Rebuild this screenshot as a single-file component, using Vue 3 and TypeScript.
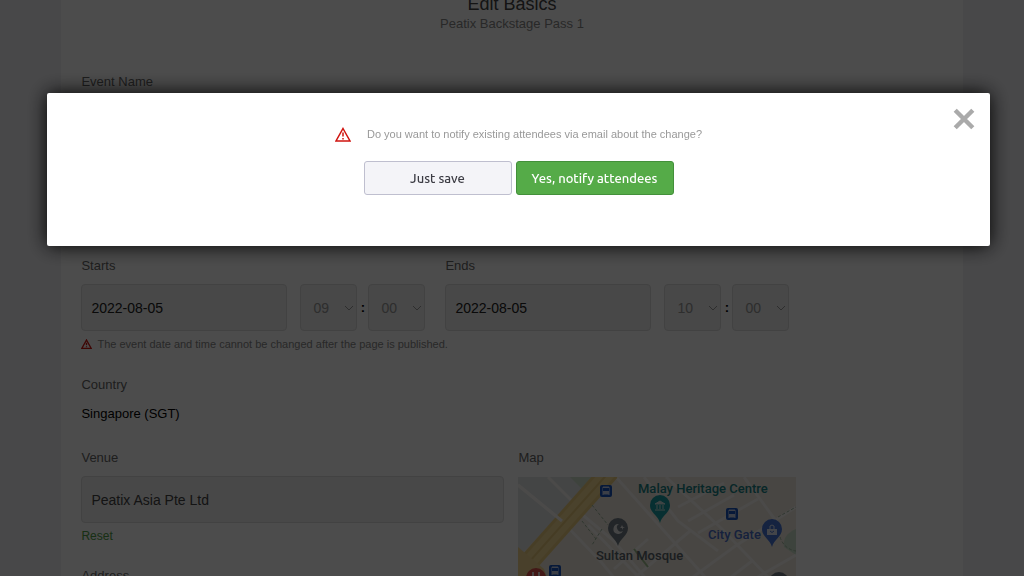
<script setup lang="ts">
interface Slot { id: string; label: string; date: string; hour: string; minute: string }
const slots: Slot[] = [
  { id: 'start', label: 'Starts', date: '2022-08-05', hour: '09', minute: '00' },
  { id: 'end', label: 'Ends', date: '2022-08-05', hour: '10', minute: '00' },
]
const stops: number[][] = [[88, 14], [214, 37], [37, 94]]
</script>

<template>
  <div class="page">
    <main class="panel">
      <header class="head">
        <h1>Edit Basics</h1>
        <p>Peatix Backstage Pass 1</p>
      </header>

      <div class="field name">
        <label for="event-name">Event Name</label>
        <input id="event-name" type="text" disabled />
      </div>

      <div class="slots">
        <div v-for="s in slots" :key="s.id" class="slot">
          <label :for="s.id + '-date'">{{ s.label }}</label>
          <div class="controls">
            <input :id="s.id + '-date'" class="date" type="text" :value="s.date" disabled />
            <span class="pick">
              <select :aria-label="s.label + ' hour'" disabled><option>{{ s.hour }}</option></select>
              <svg viewBox="0 0 10 6"><path d="M1 1l4 4 4-4" /></svg>
            </span>
            <span class="colon">:</span>
            <span class="pick">
              <select :aria-label="s.label + ' minute'" disabled><option>{{ s.minute }}</option></select>
              <svg viewBox="0 0 10 6"><path d="M1 1l4 4 4-4" /></svg>
            </span>
          </div>
        </div>
      </div>
      <p class="note">
        <svg class="warn" viewBox="0 0 16 15"><path d="M8 1.5L15 14H1z" /><path d="M8 5.5v4M8 11v1.5" /></svg>
        The event date and time cannot be changed after the page is published.
      </p>

      <div class="country">
        <span class="label">Country</span>
        <p>Singapore (SGT)</p>
      </div>

      <div class="place">
        <div class="field venue">
          <label for="venue">Venue</label>
          <input id="venue" type="text" value="Peatix Asia Pte Ltd" disabled />
          <a href="#">Reset</a>
          <span class="label address">Address</span>
        </div>
        <div class="mapcol">
          <span class="label">Map</span>
          <svg class="map" viewBox="0 0 278 140" preserveAspectRatio="xMinYMin slice" role="img" aria-label="Map">
            <rect width="278" height="140" fill="#f0eadf" />
            <path d="M0 0H80L0 80z" fill="#e4e6e8" />
            <path d="M52 0H84L70 18z" fill="#d0e2cc" />
            <path d="M278 52q-14 6-12 18l12 8z" fill="#cce2cc" />
            <g class="roads">
              <path d="M0 8L44 44 84 86 120 130M30 0L60 30M70 48L150 130M60 34L96 64 130 104M98 0L196 110M126 0L160 44 200 74M148 0L204 52 250 100M226 0L258 44M160 30L206 6M170 44L216 18M180 56L240 22M70 140L172 54M96 92L130 62M120 140L216 70 278 30M170 140L278 78M200 110L234 84" />
            </g>
            <path d="M-4 102L92-6" fill="none" stroke="#efcf80" stroke-width="20" />
            <path d="M-4 102L92-6" fill="none" stroke="#f8dc94" stroke-width="14" />
            <path d="M-4 102L92-6" fill="none" stroke="#e8c878" stroke-width="2" />
            <path d="M0 70L26 92 40 130H0z" fill="#f3d892" />
            <path d="M0 8L44 44" fill="none" stroke="#faf8f4" stroke-width="3" />
            <path d="M74 28l16 20M64 44l14 18M84 52L74 68M260 40l18-10M262 60q4 12 16 14" fill="none" stroke="#a0b8a0" stroke-width="1" stroke-dasharray="3 2" />
            <path d="M116 72l14 18" fill="none" stroke="#a0c090" stroke-width="2" />
            <g v-for="(p, i) in stops" :key="i" :transform="`translate(${p[0]} ${p[1]})`">
              <rect x="-6" y="-6" width="12" height="12" rx="2" fill="#1a55c0" />
              <path d="M-3-4H3V3H-3zM-3 3v1M3 3v1" fill="#c8d4ec" stroke="#c8d4ec" />
              <path d="M-3-3H3V0H-3z" fill="#1a55c0" />
            </g>
            <g transform="translate(142 29)">
              <path d="M0 17C-2 9-10 7-10-1A10 10 0 0 1 10-1C10 7 2 9 0 17z" fill="#1a9ea4" />
              <path d="M-5-2L0-5 5-2zM-5 4H5M-3-1V3M0-1V3M3-1V3" fill="#d0e4e4" stroke="#d0e4e4" />
            </g>
            <g transform="translate(100 52)">
              <path d="M0 17C-2 9-10 7-10-1A10 10 0 0 1 10-1C10 7 2 9 0 17z" fill="#737d86" />
              <path d="M1-5A5 5 0 1 0 5 2 4 4 0 0 1 1-5zM4-4l1 2 2 0-2 1 0 2-1-2-2 0 1-1z" fill="#e8e8e8" />
            </g>
            <g transform="translate(254 53)">
              <path d="M0 17C-2 9-10 7-10-1A10 10 0 0 1 10-1C10 7 2 9 0 17z" fill="#4876d8" />
              <path d="M-5-1H5V5H-5z" fill="#e0e6f4" />
              <path d="M-2-1V-4Q0-6 2-4V-1" fill="none" stroke="#e0e6f4" />
              <path d="M-2 1Q0 4 2 1" fill="none" stroke="#4876d8" />
            </g>
            <circle cx="18" cy="101" r="10" fill="#e0504a" />
            <path d="M15 95v5q0 2-2 2M15 95v12M21 95v12" fill="none" stroke="#f4e0dc" stroke-width="2" />
            <circle cx="261" cy="105" r="10" fill="#737d86" />
            <g class="names">
              <text x="120" y="16" fill="#1a8286">Malay Heritage Centre</text>
              <text x="190" y="62" fill="#4a70cc">City Gate</text>
              <text x="78" y="83" fill="#5a646c">Sultan Mosque</text>
            </g>
          </svg>
        </div>
      </div>
    </main>

    <div class="overlay"></div>
    <section class="dialog" role="dialog" aria-modal="true" aria-labelledby="question">
      <button class="close" type="button" aria-label="Close">
        <svg viewBox="0 0 20 20"><path d="M2 2l16 16M18 2L2 18" /></svg>
      </button>
      <p id="question">
        <svg class="warn" viewBox="0 0 16 15"><path d="M8 1.5L15 14H1z" /><path d="M8 5.5v4M8 11v1.5" /></svg>
        Do you want to notify existing attendees via email about the change?
      </p>
      <div class="actions">
        <button type="button" class="plain">Just save</button>
        <button type="button" class="go">Yes, notify attendees</button>
      </div>
    </section>
  </div>
</template>

<style>
body { overflow: hidden; background: #f1f1f5; }
</style>

<style scoped>
* { box-sizing: border-box; }
.page { height: 100vh; overflow: hidden; background: #f1f1f5; font: 13px/20px "Liberation Sans", Arial, sans-serif; color: #000; }
.panel { width: 88%; min-height: 100vh; margin: 0 auto; padding: 0 20px; background: #fff; }
h1, p { margin: 0; font-weight: 400; }
.head { text-align: center; height: 72px; display: flex; flex-direction: column; }
.head h1 { font-size: 18px; line-height: 20px; margin-top: -6px; color: #444; }
.head p { font-size: 13px; color: #888; }
label, .label { display: block; color: #666; font-size: 13px; line-height: 20px; }
input, select { height: 47px; border: 1px solid #ddd; border-radius: 4px; background: #f0f0f0; font: 14px "Liberation Sans", Arial, sans-serif; padding: 0 9px; opacity: 1; }
.field { display: flex; flex-direction: column; align-items: stretch; }
.field input { margin-top: 8px; color: #444; }
.name { height: 184px; }
.slots { display: flex; gap: 20px; }
.slot { width: 344px; }
.controls { display: flex; align-items: center; margin-top: 8px; }
.date { width: 206px; margin-right: 13px; color: #222; }
.pick { position: relative; width: 57px; }
.pick select { width: 100%; appearance: none; color: #999; padding: 0 12px; }
.pick svg { position: absolute; right: 3px; top: 21px; width: 10px; height: 6px; fill: none; stroke: #999; stroke-width: 1; }
.colon { width: 11px; text-align: center; font-weight: 700; }
.note { display: flex; align-items: center; gap: 5px; margin-top: 3px; font-size: 11px; color: #888; }
.warn { fill: none; stroke: #d0140f; stroke-width: 2; }
.note .warn { width: 11px; height: 10px; }
.country { margin-top: 21px; }
.country p { margin-top: 9px; }
.place { display: flex; gap: 14px; margin-top: 24px; }
.venue { width: 423px; }
.venue a { margin-top: 3px; font-size: 12px; color: #50a046; text-decoration: none; }
.address { margin-top: 20px; }
.map { display: block; width: 278px; height: 140px; margin-top: 9px; }
.roads { fill: none; stroke: #faf8f4; stroke-width: 3; }
.names { font: 500 13px Roboto, sans-serif; }
.overlay { position: fixed; inset: 0; background: rgba(0, 0, 0, .7); }
.dialog { position: fixed; left: 47px; right: 34px; top: 93px; height: 153px; padding-top: 31px; border-radius: 2px; background: #fff; box-shadow: 0 0 20px #000; }
.dialog p { display: flex; align-items: center; justify-content: center; gap: 16px; font-size: 11px; color: #999; }
.dialog .warn { width: 16px; height: 15px; stroke-width: 1.5; }
.actions { display: flex; justify-content: center; gap: 4px; margin-top: 17px; }
.actions button { height: 34px; border-radius: 3px; font: 500 13px Ubuntu, "Noto Sans", sans-serif; padding: 0; }
.plain { width: 148px; border: 1px solid #bfbfcf; background: #f4f4f8; color: #3c3c44; }
.go { width: 158px; border: 1px solid #43903a; background: #55ab48; color: #fff; }
.close { position: absolute; top: 15px; right: 15px; width: 22px; height: 22px; padding: 0; border: 0; background: none; }
.close svg { display: block; width: 22px; height: 22px; stroke: #aaa; stroke-width: 4; }
</style>
